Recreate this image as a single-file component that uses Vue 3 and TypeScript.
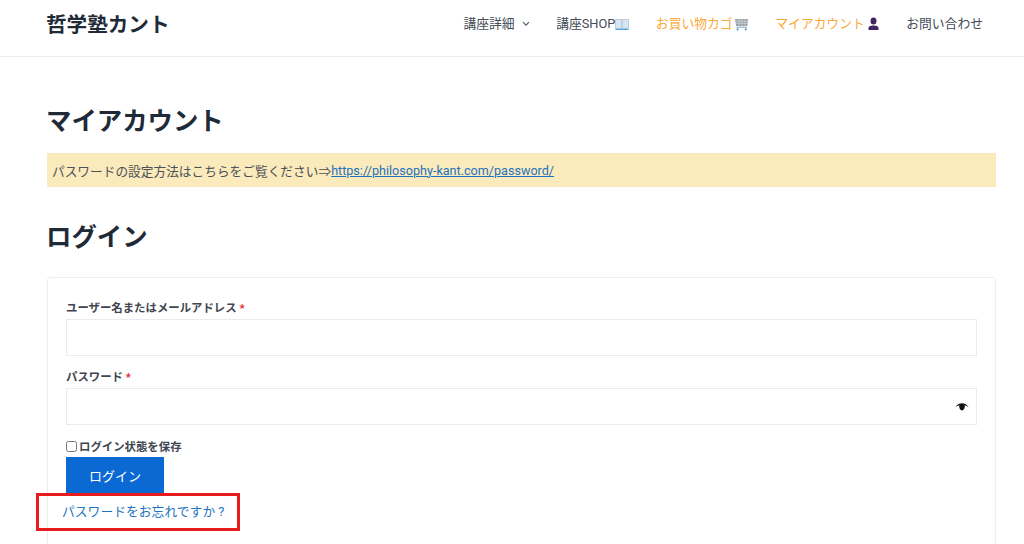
<script setup lang="ts">
interface NavItem { label: string; accent?: boolean; icon?: string; caret?: boolean }
const nav: NavItem[] = [
  { label: '講座詳細', caret: true },
  { label: '講座SHOP', icon: 'book' },
  { label: 'お買い物カゴ', accent: true, icon: 'cart' },
  { label: 'マイアカウント', accent: true, icon: 'user' },
  { label: 'お問い合わせ' },
]
</script>

<template>
  <div class="page">
    <header class="header">
      <div class="brand">哲学塾カント</div>
      <nav class="nav">
        <a v-for="item in nav" :key="item.label" class="nav-item" :class="{ accent: item.accent }">
          <span>{{ item.label }}</span>
          <svg v-if="item.caret" class="caret" width="8" height="6" viewBox="0 0 8 6"><path d="M1 1.2 4 4.2 7 1.2" fill="none" stroke="#555d66" stroke-width="1.2"/></svg>
          <svg v-if="item.icon === 'book'" class="ico book" width="14" height="14" viewBox="0 0 14 14">
            <path d="M0.5 2.5H6.6L7 3.2 7.4 2.5H13.5V11.5H0.5Z" fill="#d6e6f2" stroke="#9fb6c6" stroke-width=".6"/>
            <path d="M7 3.2V11" stroke="#8aa0b0" stroke-width=".7"/>
            <path d="M0.5 11.8H13.5V13H0.5Z" fill="#4aa5e0"/>
          </svg>
          <svg v-if="item.icon === 'cart'" class="ico" width="15" height="14" viewBox="0 0 15 14">
            <path d="M1 2H14L13.2 9H2.2Z" fill="#9aa3a8"/>
            <path d="M2 4.2H13.5M2 6.4H13.3M5 2V9M8 2V9M11 2V9" stroke="#d8dde0" stroke-width=".6"/>
            <path d="M2.4 10.2H13" stroke="#7fa8c4" stroke-width="1"/>
            <circle cx="3.6" cy="12.4" r="1.1" fill="#5aa0d0"/><circle cx="11.8" cy="12.4" r="1.1" fill="#5aa0d0"/>
          </svg>
          <svg v-if="item.icon === 'user'" class="ico user" width="11" height="14" viewBox="0 0 11 14">
            <ellipse cx="5.5" cy="4" rx="3" ry="3.6" fill="#43245f"/>
            <path d="M0.5 13V11.2C0.5 9.2 3 8.6 5.5 8.6S10.5 9.2 10.5 11.2V13Z" fill="#43245f"/>
          </svg>
        </a>
      </nav>
    </header>

    <main class="main">
      <h1 class="title">マイアカウント</h1>
      <p class="notice">パスワードの設定方法はこちらをご覧ください⇒<a class="notice-link">https://philosophy-kant.com/password/</a></p>
      <h2 class="title login-title">ログイン</h2>

      <form class="card" @submit.prevent>
        <label class="label" for="user">ユーザー名またはメールアドレス <span class="req">*</span></label>
        <input id="user" class="input" type="text" />
        <label class="label second" for="pass">パスワード <span class="req">*</span></label>
        <div class="pass-wrap">
          <input id="pass" class="input" type="password" />
          <svg class="eye" width="14" height="8" viewBox="0 0 14 8">
            <path d="M0.3 4.2C2.5 1.2 4.8 0.3 7 0.3S11.5 1.2 13.7 4.2C11.5 2.6 9.8 2.2 9.8 2.2 10 5 8.6 7.4 7 7.4S4 5 4.2 2.2C4.2 2.2 2.5 2.6 0.3 4.2Z" fill="#111"/>
          </svg>
        </div>
        <label class="remember"><input class="check" type="checkbox" /><span>ログイン状態を保存</span></label>
        <button class="btn" type="submit">ログイン</button>
        <div class="lost-wrap">
          <a class="lost">パスワードをお忘れですか ?</a>
          <span class="annotation" aria-hidden="true"></span>
        </div>
      </form>
    </main>
  </div>
</template>

<style>
html, body { margin: 0; background: #fff; overflow: hidden; }
</style>

<style scoped>
.page {
  width: 1024px;
  height: 544px;
  overflow: hidden;
  font-family: Roboto, "Noto Sans CJK JP", sans-serif;
  color: #3a4450;
  background: #fff;
}
.header {
  box-sizing: border-box;
  height: 57px;
  border-bottom: 1px solid #eaeaf2;
  display: flex;
  align-items: center;
  justify-content: space-between;
  padding: 0 41px 8px 46px;
}
.brand {
  font-size: 20.6px;
  font-weight: 700;
  color: #1f2a38;
  line-height: 1;
  margin-top: 2px;
}
.nav { display: flex; align-items: center; gap: 26.5px; }
.nav-item {
  display: flex;
  align-items: center;
  font-size: 12.8px;
  line-height: 1;
  color: #444c57;
  white-space: nowrap;
}
.nav-item.accent { color: #f9a93a; }
.caret { margin: 1px 0 0 7px; }
.ico { margin-left: 1px; }
.ico.book { margin-left: 0; }
.ico.user { margin: 0 1px 0 3px; }
.main { padding: 0 28px 0 47px; }
.title {
  margin: 0 0 0 -1px;
  font-size: 25.4px;
  font-weight: 700;
  line-height: 38px;
  color: #1f2a38;
}
.main > .title:first-child { padding-top: 45px; }
.notice {
  margin: 13px 0 0;
  height: 34px;
  display: flex;
  align-items: center;
  padding-left: 5px;
  background: #fbeabb;
  font-size: 12.7px;
  color: #4b5058;
}
.notice-link { color: #1e73be; text-decoration: underline; font-size: 12.6px; }
.login-title { margin-top: 31px; }
.card {
  box-sizing: border-box;
  margin-top: 21px;
  height: 320px;
  border: 1px solid #eeeef5;
  border-radius: 3px;
  padding: 20px 18px 0;
  display: flex;
  flex-direction: column;
  align-items: flex-start;
}
.label {
  font-size: 11.4px;
  font-weight: 700;
  line-height: 20px;
  color: #3f4650;
}
.label.second { margin-top: 11px; }
.req { color: #e2241c; }
.input {
  box-sizing: border-box;
  display: block;
  width: 100%;
  height: 37px;
  margin: 1px 0 0;
  padding: 0 10px;
  border: 1px solid #eaeaf2;
  background: #fff;
  outline: none;
}
.pass-wrap { position: relative; width: 100%; }
.eye { position: absolute; right: 8px; top: 16px; }
.remember {
  display: flex;
  align-items: center;
  margin-top: 11px;
  height: 20px;
  font-size: 11.4px;
  font-weight: 700;
  color: #3f4650;
}
.check { width: 11px; height: 11px; margin: 0 2px 0 0; }
.btn {
  width: 98px;
  height: 36px;
  margin-top: 1px;
  border: none;
  background: #0a69d2;
  color: #fff;
  font: inherit;
  font-size: 13px;
  padding: 0;
}
.lost-wrap { position: relative; margin-top: 9px; margin-left: -4px; line-height: 18px; }
.lost { font-size: 12.8px; color: #1e73be; white-space: nowrap; }
.annotation {
  position: absolute;
  left: -26px;
  top: -9px;
  width: 204px;
  height: 38px;
  border: 3px solid #e81c1c;
  box-sizing: border-box;
  pointer-events: none;
}
</style>
